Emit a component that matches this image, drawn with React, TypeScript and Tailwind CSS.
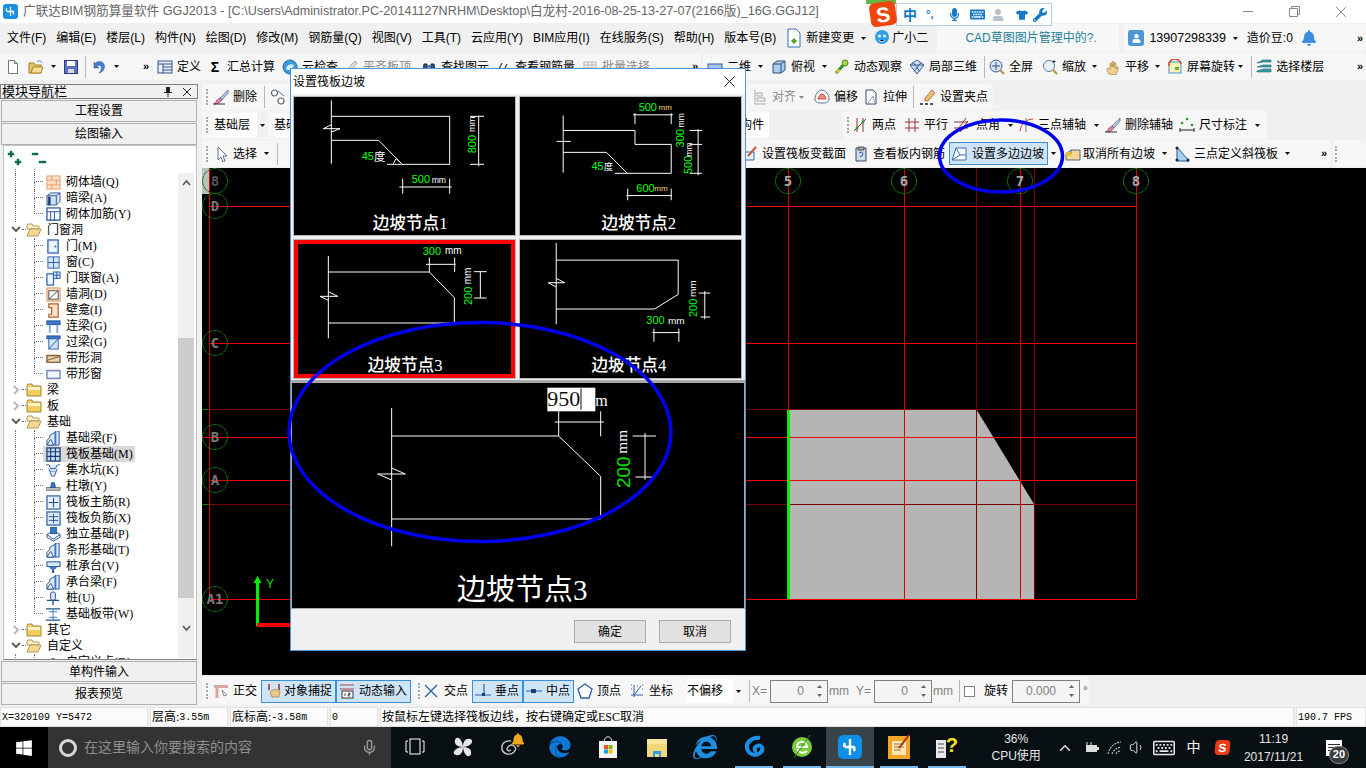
import type { ReactNode } from 'react';
import { FaBell, FaEdge, FaInternetExplorer, FaKeyboard, FaMicrophone, FaRegKeyboard, FaTshirt, FaUser, FaWindows, FaWrench } from 'react-icons/fa';
import { ChevronUp, Mic, Volume1 } from 'lucide-react';

const UI = "font-['Liberation_Sans','Noto_Sans_CJK_SC',sans-serif]";
const SERIF = "font-['Liberation_Serif','Noto_Sans_CJK_SC',serif]";

const S = ({ w = 16, h = 16, children }: { w?: number; h?: number; children: ReactNode }) => (
  <svg width={w} height={h} viewBox="0 0 16 16" className="shrink-0">{children}</svg>
);

const Caret = ({ gray = false, className = '' }: { gray?: boolean; className?: string }) => (
  <svg width="5" height="3" viewBox="0 0 5 3" className={`shrink-0 ${className}`}><path d="M0 0h5L2.5 3z" fill={gray ? '#888' : '#111'} /></svg>
);
const More = ({ className = '' }: { className?: string }) => <span className={`text-[11px] leading-none font-bold text-black ${className}`}>»</span>;
const Sep = ({ className = '' }: { className?: string }) => <div className={`w-px h-[22px] bg-[#b8b8b8] shrink-0 ${className}`} />;
const Grip = ({ className = '' }: { className?: string }) => <div className={`w-[2px] h-[16px] border-l-2 border-dotted border-[#a8a8a8] shrink-0 ${className}`} />;

const Tool = ({ icon, label, className = '', gray = false, gap = 'gap-1' }: { icon?: ReactNode; label: string; className?: string; gray?: boolean; gap?: string }) => (
  <div className={`flex items-center shrink-0 whitespace-nowrap ${gap} ${gray ? 'text-[#8a8a8a]' : 'text-black'} ${className}`}>
    {icon}
    <span>{label}</span>
  </div>
);

// toolbar icons
const I = {
  newDoc: <S><path d="M3.5 1.5h6l3 3v10h-9z" fill="#fff" stroke="#777" /><path d="M9.5 1.5v3h3" fill="#ddd" stroke="#777" /></S>,
  open: <S><path d="M1 4h5l1 2h6v8H1z" fill="#e8c56a" stroke="#a5822c" /><path d="M3 14l2-6h10l-2 6z" fill="#f6de96" stroke="#a5822c" /><path d="M9 3c2-2 4-1 5 1" stroke="#3a7bd5" fill="none" /></S>,
  save: <S><rect x="1.5" y="1.5" width="13" height="13" fill="#5a6fc0" stroke="#2d3c80" /><rect x="4" y="2" width="8" height="5" fill="#fff" /><rect x="5" y="10" width="6" height="4" fill="#d8d8e8" /></S>,
  undo: <S><path d="M5 3C10 1 14 5 12 10c-1 2-3 4-5 4 2-2 3-4 2-7-1-1-3-1-4 0l2 2H2V3l1.5 1.5z" fill="#3f7fd0" stroke="#24528f" strokeWidth=".5" /></S>,
  define: <S><rect x="1" y="2" width="14" height="12" fill="#e6eef8" stroke="#34578e" /><path d="M1 5h14M6 5v9M6 8h9M6 11h9" stroke="#34578e" /></S>,
  cloud: <S><circle cx="8" cy="8" r="7" fill="#3c9ae0" stroke="#1c6aa8" /><path d="M4 9c1-3 5-5 8-3l-2 5H5z" fill="#fff" opacity=".8" /></S>,
  ruler: <S><path d="M2 13L12 2l2 2L5 15z" fill="#ddd" stroke="#aaa" /></S>,
  binoc: <S><path d="M2 13l1-8h3v8zM10 13V5h3l1 8z" fill="#384e80" stroke="#1c2d55" /><rect x="6" y="6" width="4" height="3" fill="#6b7fae" /></S>,
  rebar: <S><path d="M3 12l4-8M8 13l4-8" stroke="#444" strokeWidth="1.3" fill="none" /></S>,
  grid: <S><path d="M2 3h12v10H2zM2 6h12M2 9h12M6 3v10M10 3v10" stroke="#b5b5b5" fill="none" /></S>,
  flat: <S><rect x="1" y="5" width="14" height="9" fill="#a8c4e8" stroke="#2f5fa5" /></S>,
  cube: <S><path d="M2 5l4-3h8v9l-4 3H2z" fill="#a9d0ee" stroke="#2e4d78" /><path d="M2 5h8v9M10 5l4-3" stroke="#2e4d78" fill="none" /></S>,
  orbit: <S><path d="M2 14L13 2" stroke="#3c8a24" strokeWidth="3" /><circle cx="11" cy="4" r="3" fill="#a8d84c" stroke="#4f8a1f" /><circle cx="4" cy="12" r="2" fill="#e0c040" /></S>,
  mesh: <S><path d="M8 1l7 5-7 9-7-9z" fill="#cfe0f4" stroke="#3d5f96" /><path d="M4 3.5l7 9M12 3.5l-7 9M1 6h14" stroke="#3d5f96" /></S>,
  zoomAll: <S><circle cx="7" cy="7" r="6" fill="#d6e3f6" stroke="#3a5c98" /><path d="M7 3v8M3 7h8" stroke="#33558f" /><path d="M11 11l4 4" stroke="#c09030" strokeWidth="2" /></S>,
  zoom: <S><circle cx="7" cy="7" r="5.5" fill="#e8f0fa" stroke="#6a7f9c" /><path d="M11 11l4 4" stroke="#c09030" strokeWidth="2" /><path d="M12 1v3M10.500 2.500h3" stroke="#333" /></S>,
  hand: <S><path d="M4 15c-2-3-3-5-1-6l2 1V5c0-1 1-1 2 0v3-5c0-1 2-1 2 0v5-4c1-1 2 0 2 1v5l1-2c1 0 2 0 1 2l-2 6z" fill="#f0d090" stroke="#a07f35" strokeWidth=".7" /></S>,
  rotate: <S><rect x="2" y="3" width="12" height="11" fill="#fdf0b0" stroke="#3a9ad0" /><path d="M2 7a6 6 0 0 1 12-2" stroke="#e0462c" strokeWidth="1.5" fill="none" /><rect x="8" y="8" width="4" height="3" fill="#62b047" /></S>,
  layers: <S><path d="M1 4l6-3h8v2H7zM1 8l6-2h8v2H7zM1 12l6-2h8v3H1z" fill="#2fa39c" stroke="#215f8b" strokeWidth=".6" /></S>,
  brush: <S><path d="M15 1L7 9l2 2 6-7z" fill="#b6c8e4" stroke="#50617d" strokeWidth=".7" /><path d="M7 9l2 2-3 3c-2 1-4 1-5 1 1-1 2-2 3-4z" fill="#e080a8" stroke="#7a3556" strokeWidth=".6" /><path d="M0 15h12" stroke="#333" /></S>,
  link: <S><circle cx="4.500" cy="4" r="3" fill="#fff" stroke="#666" strokeWidth="1.200" /><circle cx="11" cy="12" r="3" fill="#fff" stroke="#666" strokeWidth="1.200" /><path d="M8 2l6 5" stroke="#3a6fb0" /></S>,
  align: <S><path d="M3 1v14M3 15h11M5 4h5v3H5zM5 9h8v3H5z" stroke="#aaa" fill="none" /></S>,
  offset: <S><path d="M8 1c4 0 7 5 7 9 0 3-2 4-7 4s-7-1-7-4c0-4 3-9 7-9z" fill="#fff" stroke="#5a6f90" /><path d="M8 5c2 0 4 3 4 5H4c0-2 2-5 4-5z" fill="#f08a80" stroke="#d04a3a" /></S>,
  stretch: <S><path d="M3 1h7l3 3v11H3z" fill="#fff" stroke="#2e4d78" /><path d="M5 14l5-7 2 7" stroke="#2e4d78" strokeDasharray="1 1" fill="none" /></S>,
  grip: <S><path d="M12 1l3 3-7 8H5V9z" fill="#e8c070" stroke="#a04a30" strokeWidth=".7" /><path d="M0 15h3M5 15h3M10 15h3" stroke="#222" strokeWidth="1.500" /></S>,
  two: <S><path d="M2 14L14 2M5 1v14M11 1v14" stroke="#8a3038" /><circle cx="5" cy="11" r="1.500" fill="#26a030" /><circle cx="11" cy="5" r="1.500" fill="#26a030" /></S>,
  para: <S><path d="M1 5h14M1 11h14M5 1v14M11 1v14" stroke="#a0303a" /></S>,
  angle: <S><path d="M1 5h14M1 11h14M3 15L13 1M7 15L15 4" stroke="#8a3038" /></S>,
  arc: <S><path d="M2 14C3 6 9 2 15 2" stroke="#e03030" fill="none" /><path d="M8 1v14" stroke="#777" /></S>,
  dims: <S><path d="M1 11v4M15 11v4M1 13h14" stroke="#222" /><circle cx="3" cy="6" r="1.300" fill="#2a9a30" /><circle cx="8" cy="2" r="1.300" fill="#2a9a30" /><circle cx="13" cy="8" r="1.300" fill="#2a9a30" /></S>,
  cursor: <S><path d="M4 1l9 9H9l2 5-2 1-2-5-3 3z" fill="#fff" stroke="#5f6f88" /></S>,
  varSec: <S><path d="M2 6h10v8H2z" fill="#e8f2fc" stroke="#2f6fb5" /><path d="M6 10L14 1" stroke="#d0503a" strokeWidth="2" /></S>,
  viewBar: <S><path d="M3 2h10v13H3z" fill="#cfdcec" stroke="#344a70" /><path d="M5 1h6v3H5z" fill="#a8a8a8" stroke="#555" /><path d="M6 7c3-2 5 0 3 3l-2 1" stroke="#2a5a9a" fill="none" /></S>,
  polySlope: <S><path d="M1 14l4-12h10v12z" fill="#fff" stroke="#3a6fb5" /><path d="M5 2l4 7h6M9 9l-8 5" stroke="#3a6fb5" fill="none" /></S>,
  cancelSlope: <S><path d="M1 14V8l5-4h9v10z" fill="#f5d890" stroke="#556a90" /><path d="M1 8h5V4" stroke="#556a90" fill="none" /><rect x="1" y="6" width="5" height="4" fill="#e8c030" /></S>,
  threeSlope: <S><path d="M3 1v14h12z" fill="#a8d0f0" stroke="#2a5a9a" /><circle cx="3" cy="2" r="1.500" fill="#223" /><circle cx="3" cy="14" r="1.500" fill="#223" /><circle cx="14" cy="14" r="1.500" fill="#223" /></S>,
  ortho: <S><path d="M1 2h14v3H1z" fill="#d9a6a6" /><path d="M4 2v13" stroke="#d9a6a6" strokeWidth="3" /><path d="M9 7l5 5-3 1z" fill="#eef" stroke="#667" strokeWidth=".7" /></S>,
  snap: <S><path d="M3 1v6M13 1v6" stroke="#8a3038" strokeWidth="1.500" /><path d="M4 9c2-3 8-3 10-1l-1 6H6z" fill="#e8c98a" stroke="#a08040" strokeWidth=".7" /></S>,
  dyn: <S><path d="M1 2h14M1 6h14" stroke="#b04040" /><rect x="3" y="8" width="11" height="7" fill="#fff" stroke="#333" /><path d="M6 10v3M9 10h2v1.500H9V13h2" stroke="#222" fill="none" strokeWidth=".8" /></S>,
  cross: <S><path d="M2 2l12 12M14 2L2 14" stroke="#2d5fa5" strokeWidth="1.300" /></S>,
  perp: <S><path d="M0 12h16M9 1v11" stroke="#2d5fa5" strokeWidth="1.200" /><rect x="7" y="10" width="3" height="3" fill="#1c3f78" /></S>,
  mid: <S><path d="M0 8h16" stroke="#2d5fa5" /><rect x="5" y="6" width="5" height="4" fill="#1c3f78" /></S>,
  vertex: <S><path d="M8 1l7 5-3 9H4L1 6z" fill="#fff" stroke="#2d5fa5" strokeWidth="1.300" /></S>,
  coord: <S><path d="M5 2v12M2 12h12" stroke="#2d5fa5" /><path d="M2 2h1M2 6h1M13 2h1M13 6h1M8 3h1" stroke="#2d5fa5" strokeDasharray="1 1" /><path d="M5 12l7-9" stroke="#2d5fa5" /></S>,
};

// tree icons
const TI: Record<string, ReactNode> = {
  brick: <S w={15} h={15}><rect x="1" y="1" width="14" height="14" fill="#fbe0cc" stroke="#e79a63" /><path d="M1 5.500h14M1 10.500h14M6 1v4.500M11 5.500v5M6 10.500V15" stroke="#e79a63" /></S>,
  hbeam: <S w={15} h={15}><path d="M1 5l4-3h10v9l-4 4H1z" fill="#cfe0f2" stroke="#365a92" /><path d="M1 5h10v10M11 5l4-3" stroke="#365a92" fill="none" /><rect x="2" y="6" width="3" height="9" fill="#204a86" /></S>,
  rein: <S w={15} h={15}><rect x="1" y="1" width="14" height="13" fill="#fff" stroke="#1f4f96" strokeWidth="1.300" /><path d="M1 5h14M5 5v10M9 5v10" stroke="#1f4f96" /></S>,
  door: <S w={15} h={15}><rect x="2" y="1" width="11" height="14" fill="#d8e8fa" stroke="#2c5ea8" strokeWidth="1.300" /><rect x="4" y="3" width="7" height="10" fill="#eef6ff" /><circle cx="10" cy="8" r="1" fill="#2c5ea8" /></S>,
  win: <S w={15} h={15}><rect x="2" y="2" width="12" height="12" fill="#d0e4fa" stroke="#2c5ea8" /><path d="M8 2v12M2 8h12" stroke="#2c5ea8" /></S>,
  dwin: <S w={15} h={15}><rect x="1" y="3" width="7" height="12" fill="#eef6ff" stroke="#2c5ea8" strokeWidth="1.300" /><rect x="8" y="1" width="7" height="7" fill="#cfe2fa" stroke="#2c5ea8" /><path d="M11.500 1v7M8 4.500h7" stroke="#2c5ea8" /></S>,
  hole: <S w={15} h={15}><rect x="1" y="1" width="14" height="14" fill="#fbe0cc" stroke="#e08a50" /><rect x="3" y="4" width="10" height="9" fill="#fff" stroke="#4c4c4c" /><path d="M3 13L13 4" stroke="#4c4c4c" /></S>,
  niche: <S w={15} h={15}><path d="M3 1h10v14H3v-3h3V5H3z" fill="#fbe0cc" stroke="#b8602a" strokeWidth="1.300" /></S>,
  lbeam: <S w={15} h={15}><rect x="1" y="2" width="14" height="4" fill="#3c76c4" stroke="#1f4f96" /><path d="M4 6v9M12 6v9" stroke="#7fa8dc" strokeWidth="2" /></S>,
  gbeam: <S w={15} h={15}><rect x="1" y="1" width="14" height="3" fill="#3c76c4" stroke="#1f4f96" /><rect x="3" y="4" width="10" height="11" fill="#d0e4fa" stroke="#2c5ea8" /><path d="M3 15L13 4" stroke="#2c5ea8" /></S>,
  bhole: <S w={15} h={15}><path d="M0 3h15v10H0z" fill="#f3ddd0" /><rect x="1" y="5" width="14" height="7" fill="#e9d5b8" stroke="#7a4a20" strokeWidth="1.200" /><path d="M1 10l13-4" stroke="#7a4a20" /></S>,
  bwin: <S w={15} h={15}><path d="M0 2h15v12H0z" fill="#f8dcd4" /><rect x="1" y="4" width="14" height="8" fill="#f2f7ff" stroke="#4d78bc" strokeWidth="1.200" /></S>,
  fbeam: <S w={15} h={15}><path d="M1 15V10l3-3V5l7-5h3v15z" fill="#dbe7f5" stroke="#1f4f96" /><path d="M1 15l4-6 3 6z" fill="#fff" stroke="#1f4f96" /><path d="M10 1v14" stroke="#3c76c4" strokeWidth="2" /></S>,
  raft: <S w={15} h={15}><rect x="1" y="1" width="14" height="14" fill="#c5d8ee" stroke="#15396e" strokeWidth="1.300" /><path d="M5 1v14M10 1v14M1 5h14M1 10h14" stroke="#15396e" strokeWidth="1.200" /></S>,
  pit: <S w={15} h={15}><path d="M0 2h3l2 4h5l2-4h3M3 6l3 8h3l3-8" fill="#d6e7f8" stroke="#2c5ea8" /><path d="M5 9h5" stroke="#2c5ea8" strokeDasharray="1 1" /></S>,
  pier: <S w={15} h={15}><rect x="0" y="9" width="15" height="3" fill="#c0c0c0" stroke="#777" /><path d="M5 9l1-5h3l1 5z" fill="#3c76c4" stroke="#1f4f96" /></S>,
  main: <S w={15} h={15}><rect x="1" y="1" width="14" height="14" fill="#e6f0fb" stroke="#2c5ea8" strokeWidth="1.300" /><path d="M8 3v10M3 8h10" stroke="#1f4f96" strokeWidth="1.200" /></S>,
  neg: <S w={15} h={15}><rect x="1" y="1" width="14" height="14" fill="#dbe8f7" stroke="#2c5ea8" strokeWidth="1.300" /><path d="M8 3v10M3 6h10M3 10h10" stroke="#1f4f96" /></S>,
  ind: <S w={15} h={15}><path d="M1 8l7-4 7 4-7 5z" fill="#f4f8fd" stroke="#1f4f96" /><path d="M1 8v3l7 4 7-4V8" fill="none" stroke="#1f4f96" /><rect x="5" y="0" width="6" height="7" fill="#3c76c4" stroke="#1f4f96" /></S>,
  cap: <S w={15} h={15}><rect x="1" y="3" width="14" height="5" fill="#d6e7f8" stroke="#1f4f96" /><path d="M3 8h9l-2 3H5z" fill="#3c76c4" /><path d="M7.500 11v4" stroke="#1f4f96" strokeWidth="2" /></S>,
  pile: <S w={15} h={15}><rect x="5" y="1" width="5" height="9" rx="2" fill="#dbe8f7" stroke="#1f4f96" /><path d="M1 10h13M7.500 10v5" stroke="#1f4f96" strokeWidth="1.500" /></S>,
  band: <S w={15} h={15}><path d="M0 2h15M0 14h15" stroke="#1f4f96" strokeWidth="1.300" /><path d="M7.500 2v12M3 5h9M3 11h9" stroke="#3c76c4" /></S>,
};

const Folder = ({ open }: { open: boolean }) => (
  <svg width="16" height="14" viewBox="0 0 16 14" className="shrink-0">
    {open ? (
      <>
        <path d="M1 3l1-2h4l1 2h6v3H1z" fill="#fff3c8" stroke="#b3985a" />
        <path d="M1 13l3-7h11l-3 7z" fill="#f4d890" stroke="#b3985a" />
      </>
    ) : (
      <>
        <path d="M1 3l1-2h4l1 2h8v10H1z" fill="#f3cd60" stroke="#a8863a" />
        <rect x="2" y="4" width="12" height="3" fill="#fff3c8" />
      </>
    )}
  </svg>
);

type Row = { l: string; i?: string; last?: boolean; open?: boolean; sel?: boolean };
const rows: Row[] = [
  { l: '砌体墙(Q)', i: 'brick' },
  { l: '暗梁(A)', i: 'hbeam' },
  { l: '砌体加筋(Y)', i: 'rein', last: true },
  { l: '门窗洞', open: true },
  { l: '门(M)', i: 'door' },
  { l: '窗(C)', i: 'win' },
  { l: '门联窗(A)', i: 'dwin' },
  { l: '墙洞(D)', i: 'hole' },
  { l: '壁龛(I)', i: 'niche' },
  { l: '连梁(G)', i: 'lbeam' },
  { l: '过梁(G)', i: 'gbeam' },
  { l: '带形洞', i: 'bhole' },
  { l: '带形窗', i: 'bwin', last: true },
  { l: '梁', open: false },
  { l: '板', open: false },
  { l: '基础', open: true },
  { l: '基础梁(F)', i: 'fbeam' },
  { l: '筏板基础(M)', i: 'raft', sel: true },
  { l: '集水坑(K)', i: 'pit' },
  { l: '柱墩(Y)', i: 'pier' },
  { l: '筏板主筋(R)', i: 'main' },
  { l: '筏板负筋(X)', i: 'neg' },
  { l: '独立基础(P)', i: 'ind' },
  { l: '条形基础(T)', i: 'fbeam' },
  { l: '桩承台(V)', i: 'cap' },
  { l: '承台梁(F)', i: 'fbeam' },
  { l: '桩(U)', i: 'pile' },
  { l: '基础板带(W)', i: 'band', last: true },
  { l: '其它', open: false },
  { l: '自定义', open: true },
  { l: '自定义点(D)', i: 'pier' },
];

const TreeRow = ({ r }: { r: Row }) => {
  if (!r.i) {
    return (
      <div className="flex items-center h-4 shrink-0">
        <div className="w-[6px]" />
        <svg width="12" height="10" viewBox="0 0 12 10" className="shrink-0">
          <path d={r.open ? 'M2 2l4 4 4-4' : 'M4 1l4 4-4 4'} stroke={r.open ? '#555' : '#b5b5b5'} strokeWidth="1.800" fill="none" />
        </svg>
        <div className="w-[4px] h-2 border-b border-dotted border-[#777] self-start" />
        <Folder open={!!r.open} />
        <span className="ml-[5px] text-[12px]">{r.l}</span>
      </div>
    );
  }
  return (
    <div className="flex h-4 shrink-0">
      <div className="w-[11px]" />
      <div className="w-[19px] border-l border-dotted border-[#777]" />
      <div className="w-[9px] flex flex-col">
        <div className="h-2 border-l border-b border-dotted border-[#777]" />
        <div className={`h-2 ${r.last ? '' : 'border-l border-dotted border-[#777]'}`} />
      </div>
      <div className={`flex items-center pl-[3px] pr-[2px] ${r.sel ? 'bg-[#d9d9d9]' : ''}`}>
        {TI[r.i]}
        <span className="ml-[5px] text-[12px] whitespace-nowrap">{r.l}</span>
      </div>
    </div>
  );
};

const PanelBtn = ({ label, className = '' }: { label: string; className?: string }) => (
  <div className={`mx-px w-[196px] border border-[#b0b0b0] bg-[#f0f0f0] flex items-center justify-center text-[12px] text-black ${className}`}>{label}</div>
);

const LeftPanel = () => (
  <div className={`w-[200px] shrink-0 flex flex-col pt-[3px] ${SERIF}`}>
    <div className="h-[15px] w-[198px] flex items-center border border-[#808080] text-[13px] leading-none">
      <span className="pl-[1px] flex-1">模块导航栏</span>
      <svg width="8" height="10" viewBox="0 0 8 10" className="mr-[11px]"><path d="M2 0v5H0v1h3.500v4h1V6H8V5H6V0z" fill="#222" /></svg>
      <svg width="8" height="8" viewBox="0 0 8 8" className="mr-[6px]"><path d="M0 0l8 8M8 0L0 8" stroke="#222" /></svg>
    </div>
    <PanelBtn label="工程设置" className="mt-px h-[22px]" />
    <PanelBtn label="绘图输入" className="mt-px h-[22px]" />
    <div className="ml-[3px] w-[194px] h-[515px] bg-white border border-[#c0c0c0] border-b-[#808080] flex flex-col overflow-hidden">
      <div className="h-[23px] flex items-center pl-[3px] gap-2 shrink-0">
        <svg width="16" height="16" viewBox="0 0 16 16"><path d="M3 1h2v2h2v2H5v2H3V5H1V3h2zM10 9h2v2h2v2h-2v2h-2v-2H8v-2h2z" fill="#0c6e62" stroke="#063" strokeWidth=".4" /></svg>
        <svg width="16" height="16" viewBox="0 0 16 16"><path d="M1 3h6v2H1zM8 11h7v2H8z" fill="#0c6e62" stroke="#063" strokeWidth=".4" /></svg>
      </div>
      <div className="flex flex-1 min-h-0">
        <div className="flex-1 min-w-0 overflow-hidden flex flex-col">
          <div className="flex h-[5px] shrink-0">
            <div className="w-[11px]" />
            <div className="w-[19px] border-l border-dotted border-[#777]" />
            <div className="w-[9px] border-l border-dotted border-[#777]" />
          </div>
          {rows.map((r) => <TreeRow key={r.l} r={r} />)}
        </div>
        <div className="w-[16px] mr-[2px] mt-[4px] mb-[1px] bg-[#f0f0f0] flex flex-col items-center shrink-0">
          <div className="h-[19px] flex items-center">
            <svg width="9" height="6" viewBox="0 0 9 6"><path d="M1 5l3.500-4L8 5" stroke="#555" strokeWidth="1.600" fill="none" /></svg>
          </div>
          <div className="h-[146px]" />
          <div className="w-full h-[260px] bg-[#cdcdcd]" />
          <div className="flex-1 flex items-center">
            <svg width="9" height="6" viewBox="0 0 9 6"><path d="M1 1l3.500 4L8 1" stroke="#555" strokeWidth="1.600" fill="none" /></svg>
          </div>
        </div>
      </div>
    </div>
    <PanelBtn label="单构件输入" className="mt-px h-[21px]" />
    <PanelBtn label="报表预览" className="mt-px h-[22px]" />
  </div>
);

const Bubble = ({ x, y, t, c = '#8a8a8a' }: { x: number; y: number; t: string; c?: string }) => (
  <>
    <circle cx={x} cy={y} r="12.500" fill="none" stroke="#0a7a0a" strokeDasharray="5 .6" />
    <text x={x} y={y + 5} textAnchor="middle" fontSize="14" fontWeight="bold" fill={c} className="font-['DejaVu_Sans_Mono',monospace]">{t}</text>
  </>
);

const Canvas = () => (
  <svg viewBox="202 168 1164 507" className="w-[1164px] h-[507px] bg-black block mt-px shrink-0">
    <rect x="202" y="168" width="7" height="26" fill="#bdbdbd" />
    <path d="M788 409.500H976.500L1034 504V599H788z" fill="#b5b5b5" />
    <g shapeRendering="crispEdges" fill="none">
      <path d="M209 206.500H1136M209 343.500H1136M202 437.500H1136M209 480.500H1136M209 599.500H1136" stroke="#f00000" />
      <path d="M202 409.500H1136M202 504.500H1136" stroke="#7a0000" />
      <path d="M209.500 168V599M788.500 168V599M904.500 168V599M1020.500 168V599M1136.500 168V599" stroke="#d80000" />
      <path d="M976.500 168V599M1034.500 168V599" stroke="#7a0000" />
      <path d="M202 409.500H209M202 504.500H209" stroke="#0a7a0a" />
      <rect x="787" y="410" width="3" height="189" fill="#00f000" stroke="none" />
      <rect x="256" y="582" width="3" height="44" fill="#00f000" stroke="none" />
      <rect x="257" y="623" width="40" height="4" fill="#f00000" stroke="none" />
    </g>
    <path d="M257.500 576l4 7h-8z" fill="#00f000" />
    <text x="266" y="588" fontSize="12" fill="#00e000" className="font-['Liberation_Sans',sans-serif]">Y</text>
    <Bubble x={215} y={181} t="8" c="#555" />
    <Bubble x={215} y={206} t="D" c="#777" />
    <Bubble x={215} y={343} t="C" c="#777" />
    <Bubble x={215} y={437} t="B" c="#777" />
    <Bubble x={215} y={480} t="A" c="#777" />
    <Bubble x={215} y={599} t="A1" c="#777" />
    <Bubble x={788} y={181} t="5" c="#aaa" />
    <Bubble x={904} y={181} t="6" c="#aaa" />
    <Bubble x={1020} y={181} t="7" c="#aaa" />
    <Bubble x={1136} y={181} t="8" c="#aaa" />
  </svg>
);

// labels inside the node pictures, coordinates are 3x page pixels
const Lbl = ({ x, y, t, c = '#00ff00', s = 33, r }: { x: number; y: number; t: string; c?: string; s?: number; r?: boolean }) => (
  <text x={x} y={y} fill={c} fontSize={s} transform={r ? `rotate(-90 ${x} ${y})` : undefined} className="font-['Liberation_Sans','Noto_Sans_CJK_SC',sans-serif]">{t}</text>
);
const Title = ({ x, y, t, s = 50 }: { x: number; y: number; t: string; s?: number }) => (
  <text x={x} y={y} fill="#fff" fontSize={s} fontWeight={s < 60 ? 500 : 400} className="font-['Liberation_Serif','Noto_Sans_CJK_SC',serif]">{t}</text>
);
const Wire = ({ d, w = 3 }: { d: string; w?: number }) => <path d={d} stroke="#fff" strokeWidth={w} fill="none" />;

const Thumb1 = () => (
  <svg viewBox="12 87 663 414" className="w-[221px] h-[138px] block bg-black">
    <Wire d="M124 97V287M124 145H479V289H291M124 217H266L335 287M100 182H150M124 170L100 182M124 192L150 182M310 287L318 272L335 287M540 145H582M540 289H582M566 143V295M338 332V377M479 332V377M328 357H485" />
    <Lbl x={558} y={256} t="800" r />
    <Lbl x={556} y={192} t="mm" c="#fff" s={28} r />
    <Lbl x={215} y={277} t="45" />
    <Lbl x={252} y={280} t="度" c="#fff" s={34} />
    <Lbl x={365} y={345} t="500" />
    <Lbl x={425} y={346} t="mm" c="#fff" s={26} />
    <Title x={248} y={484} t="边坡节点1" />
  </svg>
);
const Thumb2 = () => (
  <svg viewBox="690 87 665 414" className="w-[221px] h-[138px] block bg-black">
    <Wire d="M820 142V314M820 187H1036V229H1145V316H975M820 253H950L1013 316M800 220H843M1036 135V168M1145 135V168M1030 140H1150M1200 187H1238M1200 229H1238M1200 316H1238M1226 183V322M1014 362V397M1145 362V397M1010 383H1147" />
    <Lbl x={1047} y={129} t="500" />
    <Lbl x={1107} y={126} t="mm" c="#ffcf80" s={24} />
    <Lbl x={1184} y={238} t="300" r />
    <Lbl x={1184} y={178} t="mm" c="#fff" s={26} r />
    <Lbl x={1208} y={318} t="500" r />
    <Lbl x={1207} y={266} t="mm" c="#fff" s={26} r />
    <Lbl x={1040} y={372} t="600" />
    <Lbl x={1094} y={368} t="mm" c="#ffcf80" s={24} />
    <Lbl x={905} y={305} t="45" />
    <Lbl x={942} y={306} t="度" c="#fff" s={28} />
    <Title x={935} y={483} t="边坡节点2" />
  </svg>
);
const Thumb3 = () => (
  <svg viewBox="12 517 663 414" className="w-[221px] h-[138px] block bg-black">
    <Wire d="M115 565V812M115 613H418L493 690V766M115 766H493M90 686H143M115 672L143 686M115 698L90 686M418 570V613M494 570V613M408 590H497M552 612H590M552 691H590M571 612V691" />
    <Lbl x={398} y={563} t="300" />
    <Lbl x={465} y={560} t="mm" c="#fff" s={30} />
    <Lbl x={545} y={712} t="200" r />
    <Lbl x={542} y={650} t="mm" c="#fff" s={30} r />
    <Title x={233} y={910} t="边坡节点3" />
    <rect x="18" y="523" width="651" height="402" fill="none" stroke="#ff0000" strokeWidth="12" />
  </svg>
);
const Thumb4 = () => (
  <svg viewBox="690 517 665 414" className="w-[221px] h-[138px] block bg-black">
    <Wire d="M799 525V770M799 577H1166V680L1095 724H799M775 645H825M799 632L825 645M799 658L775 645M1228 676H1262M1233 748H1262M1246 670V755M1093 783V823M1168 783V823M1088 795H1170" />
    <Lbl x={1223} y={748} t="200" r />
    <Lbl x={1220} y={688} t="mm" c="#fff" s={30} r />
    <Lbl x={1070} y={770} t="300" />
    <Lbl x={1135} y={768} t="mm" c="#fff" s={30} />
    <Title x={905} y={910} t="边坡节点4" />
  </svg>
);
const BigNode = () => (
  <svg viewBox="20 10 1356 675" className="w-[452px] h-[225px] block bg-black">
    <Wire d="M319 85V500M319 169H820L946 290V418H319M277 283H360M319 265L360 283M319 301L277 283M820 95V169M946 95V170M808 127H956M1042 169H1112M1050 292H1105M1079 160V300" />
    <rect x="786" y="24" width="144" height="71" fill="#fff" />
    <text x="786" y="80" fontSize="66" fill="#111" className="font-['Liberation_Serif',serif]">950</text>
    <path d="M887 27V90" stroke="#111" strokeWidth="3" />
    <text x="930" y="78" fontSize="48" fill="#fff" className="font-['Liberation_Serif',serif]">m</text>
    <Lbl x={1034} y={325} t="200" s={57} c="#00e000" r />
    <text x="1026" y="222" fontSize="46" fill="#fff" transform="rotate(-90 1026 222)" className="font-['Liberation_Serif',serif]">mm</text>
    <Title x={515} y={660} t="边坡节点3" s={87} />
  </svg>
);

const DlgBtn = ({ label }: { label: string }) => (
  <div className="w-[72px] h-[23px] border border-[#adadad] bg-[#e1e1e1] flex items-center justify-center text-[12px] text-black">{label}</div>
);

const Dialog = () => (
  <div className={`absolute left-[290px] top-[68px] w-[456px] h-[583px] border border-[#4a97e0] bg-[#f0f0f0] flex flex-col ${UI}`}>
    <div className="h-[25px] bg-white flex items-center justify-between pl-[2px] pr-[10px] shrink-0">
      <span className="text-[12px] text-black">设置筏板边坡</span>
      <svg width="11" height="11" viewBox="0 0 11 11"><path d="M.5.500l10 10M10.500.500l-10 10" stroke="#222" /></svg>
    </div>
    <div className="pt-[2px] pl-[2px] grid grid-cols-[223px_223px] gap-[3px] shrink-0">
      <div className="border border-[#b8b8b8]"><Thumb1 /></div>
      <div className="border border-[#b8b8b8]"><Thumb2 /></div>
      <div className="border border-[#b8b8b8]"><Thumb3 /></div>
      <div className="border border-[#b8b8b8]"><Thumb4 /></div>
    </div>
    <div className="mt-px h-[3px] bg-[#a8a8a8] shrink-0" />
    <div className="border-l border-r border-b border-[#a8a8a8] w-[454px] shrink-0"><BigNode /></div>
    <div className="flex justify-end gap-[13px] pr-[14px] pt-[11px]">
      <DlgBtn label="确定" />
      <DlgBtn label="取消" />
    </div>
  </div>
);

const Spin = ({ v, className = '' }: { v: string; className?: string }) => (
  <div className={`h-[23px] border border-[#808080] bg-[#f5f5f5] flex items-center shrink-0 ${className}`}>
    <span className="flex-1 text-right text-[#808080] text-[12px] pr-[7px]">{v}</span>
    <div className="w-[16px] h-full flex flex-col items-center justify-around py-[2px]">
      <svg width="5" height="3" viewBox="0 0 5 3"><path d="M2.500 0L5 3H0z" fill="#666" /></svg>
      <svg width="5" height="3" viewBox="0 0 5 3"><path d="M0 0h5L2.500 3z" fill="#666" /></svg>
    </div>
  </div>
);

const GROUP = 'bg-[#f6f6f6] rounded-[3px] flex items-center shrink-0';

const MainArea = () => (
  <div className={`flex-1 min-w-0 flex flex-col pt-[3px] text-[12px] ${UI}`}>
    <div className="flex h-[26px] shrink-0">
      <div className={`${GROUP} w-[791px]`}>
        <Grip className="ml-[4px]" />
        <Tool icon={I.brush} label="删除" className="ml-[5px]" />
        <Sep className="ml-[7px]" />
        <div className="ml-[5px]">{I.link}</div>
        <Tool icon={I.align} label="对齐" gray className="ml-[466px]" />
        <Caret gray className="ml-[3px]" />
        <Tool icon={I.offset} label="偏移" className="ml-[10px]" />
        <Tool icon={I.stretch} label="拉伸" className="ml-[5px]" />
        <Sep className="ml-[6px]" />
        <Tool icon={I.grip} label="设置夹点" className="ml-[6px]" />
      </div>
    </div>
    <div className="flex h-[28px] mt-px shrink-0">
      <div className={`${GROUP} w-[567px]`}>
        <Grip className="ml-[4px]" />
        <div className="ml-[5px] w-[44px] h-[24px] bg-white flex items-center pl-px">基础层</div>
        <div className="w-[11px] h-[24px] bg-[#f0f0f0] flex items-center justify-center"><Caret /></div>
        <div className="ml-[5px] flex-1 h-[24px] bg-white flex items-center pl-px justify-between pr-[5px]">
          <span>基础</span>
          <span>构件</span>
        </div>
      </div>
      <div className={`${GROUP} w-[424px] ml-[74px]`}>
        <Grip className="ml-[4px]" />
        <Tool icon={I.two} label="两点" className="ml-[3px]" />
        <Tool icon={I.para} label="平行" className="ml-[8px]" />
        <Tool icon={I.angle} label="点角" className="ml-[5px]" gap="gap-[7px]" />
        <Caret className="ml-[8px]" />
        <Tool icon={I.arc} label="三点辅轴" className="ml-[5px]" />
        <Caret className="ml-[8px]" />
        <Tool icon={I.brush} label="删除辅轴" className="ml-[6px]" />
        <Tool icon={I.dims} label="尺寸标注" className="ml-[6px]" />
        <Caret className="ml-[8px]" />
      </div>
    </div>
    <div className="flex h-[27px] mt-px shrink-0">
      <div className={`${GROUP} w-[1128px]`}>
        <Grip className="ml-[4px]" />
        <div className="ml-[6px]">{I.cursor}</div>
        <span className="ml-[3px]">选择</span>
        <Caret className="ml-[7px]" />
        <Sep className="ml-[8px]" />
        <Tool icon={I.varSec} label="设置筏板变截面" className="ml-[464px]" />
        <Tool icon={I.viewBar} label="查看板内钢筋" className="ml-[7px]" />
        <div className="ml-[4px] w-[99px] h-[23px] border border-[#3a8fd6] bg-[#cfe5f7] flex items-center pl-[1px] gap-[5px]">
          {I.polySlope}<span>设置多边边坡</span>
        </div>
        <Caret className="ml-[3px]" />
        <Tool icon={I.cancelSlope} label="取消所有边坡" className="ml-[9px]" gap="gap-[2px]" />
        <Caret className="ml-[7px]" />
        <Tool icon={I.threeSlope} label="三点定义斜筏板" className="ml-[7px]" gap="gap-[4px]" />
        <Caret className="ml-[7px]" />
        <More className="ml-auto mr-[3px]" />
      </div>
      <div className={`${GROUP} flex-1 ml-[3px] justify-start`}><Grip className="ml-[2px]" /></div>
    </div>
    <Canvas />
    <div className="flex h-[28px] mt-[2px] shrink-0">
      <div className={`${GROUP} w-[210px]`}>
        <Grip className="ml-[4px]" />
        <Tool icon={I.ortho} label="正交" className="ml-[5px]" />
        <div className="ml-[4px] w-[75px] h-[23px] border border-[#3a8fd6] bg-[#cfe5f7] flex items-center pl-[4px] gap-[2px]">{I.snap}<span>对象捕捉</span></div>
        <div className="w-[75px] h-[23px] border border-[#3a8fd6] bg-[#cfe5f7] flex items-center pl-[2px] gap-[4px]">{I.dyn}<span>动态输入</span></div>
      </div>
      <div className={`${GROUP} ml-[2px] w-[675px]`}>
        <Grip className="ml-[4px]" />
        <Tool icon={I.cross} label="交点" className="ml-[3px]" gap="gap-[5px]" />
        <div className="ml-[4px] w-[51px] h-[23px] border border-[#3a8fd6] bg-[#cfe5f7] flex items-center pl-[2px] gap-[4px]">{I.perp}<span>垂点</span></div>
        <div className="w-[51px] h-[23px] border border-[#3a8fd6] bg-[#cfe5f7] flex items-center pl-[2px] gap-[4px]">{I.mid}<span>中点</span></div>
        <Tool icon={I.vertex} label="顶点" className="ml-[3px]" />
        <Tool icon={I.coord} label="坐标" className="ml-[8px]" />
        <div className="ml-[13px] w-[47px] h-[24px] bg-white flex items-center pl-px">不偏移</div>
        <Caret className="ml-[3px]" />
        <Sep className="ml-[8px]" />
        <span className="ml-[2px] w-[18px] text-[#808080]">X=</span>
        <Spin v="0" className="w-[58px]" />
        <span className="w-[28px] pl-px text-[#808080]">mm</span>
        <span className="w-[18px] text-[#808080]">Y=</span>
        <Spin v="0" className="w-[58px]" />
        <span className="w-[27px] pl-px text-[#808080]">mm</span>
        <Sep />
        <div className="ml-[4px] w-[11px] h-[11px] border border-[#808080] bg-white" />
        <span className="ml-[9px] w-[24px]">旋转</span>
        <Spin v="0.000" className="ml-[4px] w-[68px]" />
        <span className="ml-[3px] text-[#555]">°</span>
      </div>
    </div>
  </div>
);

const StatusCell = ({ children, className = '' }: { children: ReactNode; className?: string }) => (
  <div className={`h-[20px] bg-[#fbfbfb] border border-[#e2e2e2] flex items-center pl-[1px] shrink-0 whitespace-nowrap ${className}`}>{children}</div>
);
const M = ({ t }: { t: string }) => <span className="font-['Liberation_Mono',monospace] text-[10px]">{t}</span>;

const TaskIcon = ({ children, on = false, active = false }: { children: ReactNode; on?: boolean; active?: boolean }) => (
  <div className={`w-[48.36px] h-[41px] flex flex-col items-center shrink-0 ${active ? 'bg-[#38444a]' : ''}`}>
    <div className="flex-1 flex items-center justify-center">{children}</div>
    <div className={`h-[2px] ${active ? 'w-full' : 'w-[38px]'} ${on ? 'bg-[#76b9ed]' : ''}`} />
  </div>
);

const Taskbar = () => (
  <div className={`h-[41px] bg-[#081014] flex items-stretch text-white shrink-0 ${UI}`}>
    <div className="w-[48px] bg-black flex items-center justify-center"><FaWindows size={18} color="#fff" /></div>
    <div className="w-[343px] bg-[#333333] flex items-center pl-[11px] pr-[13px]">
      <div className="w-[18px] h-[18px] rounded-full border-[3px] border-[#d8d8d8]" />
      <span className="ml-[7px] flex-1 text-[14px] text-[#8f8f8f]">在这里输入你要搜索的内容</span>
      <Mic size={17} color="#999" />
    </div>
    <TaskIcon>
      <svg width="20" height="17" viewBox="0 0 20 17"><rect x="5" y="1" width="10" height="15" fill="none" stroke="#fff" /><path d="M3 3H1v11h2M17 3h2v11h-2" fill="none" stroke="#fff" /></svg>
    </TaskIcon>
    <TaskIcon>
      <svg width="22" height="22" viewBox="0 0 22 22"><path d="M11 11C5 11 2 8 3 4s7-3 8 7zM11 11c0-6 3-9 7-8s3 7-7 8zM11 11c6 0 9 3 8 7s-7 3-8-7zM11 11c0 6-3 9-7 8s-3-7 7-8z" fill="#e6e6e6" /></svg>
    </TaskIcon>
    <TaskIcon>
      <div className="relative w-[26px] h-[22px]">
        <svg width="22" height="22" viewBox="0 0 22 22"><path d="M12 5C6 4 2 8 3 13s8 7 12 3-1-9-5-6-1 6 2 4" fill="none" stroke="#c8c8c8" strokeWidth="1.400" /></svg>
        <FaBell size={14} color="#f0a820" className="absolute right-0 top-[-3px]" />
      </div>
    </TaskIcon>
    <TaskIcon><FaEdge size={22} color="#0d78d8" /></TaskIcon>
    <TaskIcon>
      <svg width="22" height="24" viewBox="0 0 22 24"><path d="M7 7c0-7 8-7 8 0" fill="none" stroke="#eee" /><rect x="2" y="6" width="18" height="17" fill="#f4f4f4" /><rect x="7" y="10" width="4" height="4" fill="#e8502a" /><rect x="11.500" y="10" width="4" height="4" fill="#7fba00" /><rect x="7" y="14.500" width="4" height="4" fill="#00a4ef" /><rect x="11.500" y="14.500" width="4" height="4" fill="#ffb900" /></svg>
    </TaskIcon>
    <TaskIcon>
      <svg width="22" height="22" viewBox="0 0 22 22"><path d="M1 3h8l2 2h10v16H1z" fill="#f3d778" /><rect x="1" y="3" width="20" height="5" fill="#f9e59c" /><path d="M7 21v-6h8v6h-2v-3H9v3z" fill="#2a9ce8" /></svg>
    </TaskIcon>
    <TaskIcon><FaInternetExplorer size={24} color="#1e8fe0" /></TaskIcon>
    <TaskIcon on>
      <svg width="24" height="26" viewBox="0 0 24 26"><path d="M18 4C10 3 4 8 5 14s8 9 13 5 1-9-3-7-2 5 0 5" fill="none" stroke="#1a8fe8" strokeWidth="4" /></svg>
    </TaskIcon>
    <TaskIcon on>
      <svg width="24" height="26" viewBox="0 0 24 26"><circle cx="12" cy="13" r="10" fill="#7ccb3c" /><path d="M6 13h12M7 13c0-7 10-7 10 0M17 17c-3 3-8 2-10-2" fill="none" stroke="#fff" strokeWidth="2" /><path d="M20 1L4 24" stroke="#2f8a20" /></svg>
    </TaskIcon>
    <TaskIcon on active>
      <svg width="24" height="24" viewBox="0 0 24 24"><rect width="24" height="24" rx="5" fill="#0f8fe8" /><path d="M12 4v16M7 12h10M7 12a3 3 0 0 1 0-4M17 12a3 3 0 0 0 0 4" stroke="#fff" strokeWidth="2.400" fill="none" /></svg>
    </TaskIcon>
    <TaskIcon on>
      <svg width="24" height="26" viewBox="0 0 24 26"><rect x="1" y="2" width="22" height="23" fill="#f2a526" /><rect x="5" y="7" width="14" height="14" fill="#fbe6b8" /><path d="M7 10h10M7 13h10M7 16h7" stroke="#a07030" /><path d="M22 1L12 14" stroke="#a03010" strokeWidth="2" /></svg>
    </TaskIcon>
    <TaskIcon on>
      <div className="flex items-start">
        <svg width="10" height="20" viewBox="0 0 10 20" className="mt-[6px]"><rect width="10" height="18" fill="#e8e8e8" /><path d="M2 4h6M2 8h6M2 12h6" stroke="#555" /></svg>
        <span className="text-[20px] leading-[22px] font-bold text-[#f5e020]">?</span>
      </div>
    </TaskIcon>
    <div className="ml-[10px] w-[70px] flex flex-col items-center justify-center text-[12px] leading-[17px] text-[#e6e6e6]">
      <span>36%</span>
      <span>CPU使用</span>
    </div>
    <div className="w-[27px] flex items-center justify-center"><ChevronUp size={18} color="#ddd" /></div>
    <div className="w-[25px] flex items-center justify-center">
      <svg width="16" height="12" viewBox="0 0 16 12"><rect x="3" y="3" width="11" height="7" fill="#ddd" /><rect x="14" y="5" width="2" height="3" fill="#ddd" /><path d="M4 0v3M8 0v3" stroke="#ddd" /></svg>
    </div>
    <div className="w-[24px] flex items-center justify-center">
      <svg width="16" height="14" viewBox="0 0 16 14"><path d="M1 13C2 7 7 2 14 1M5 13c1-3 4-6 9-7M9 13c0-1 2-3 5-3" fill="none" stroke="#ccc" strokeWidth="1.100" strokeDasharray="2 1" /></svg>
    </div>
    <div className="w-[21px] flex items-center justify-center"><Volume1 size={17} color="#ddd" strokeWidth={1.400} /></div>
    <div className="w-[32px] flex items-center justify-center"><FaRegKeyboard size={22} color="#e8e8e8" /></div>
    <div className="w-[27px] flex items-center justify-center text-[14px]">中</div>
    <div className="w-[30px] flex items-center justify-center">
      <div className="w-[15px] h-[15px] rounded-[4px] bg-[#ec3a12] flex items-center justify-center text-[12px] font-bold leading-none -skew-x-6">S</div>
    </div>
    <div className="w-[73px] flex flex-col items-center justify-center text-[12px] leading-[18px] text-[#e6e6e6]">
      <span>11:19</span>
      <span>2017/11/21</span>
    </div>
    <div className="w-[56px] flex items-center pl-[16px]">
      <div className="relative w-[16px] h-[16px] bg-white flex flex-col justify-center gap-[2px] px-[2px]">
        <div className="h-px bg-[#333]" />
        <div className="h-px bg-[#333]" />
        <div className="h-px bg-[#333]" />
        <div className="absolute left-[3px] top-[6px] w-[20px] h-[18px] rounded-full bg-[#3a3a3a] border border-[#888] text-[11px] font-bold flex items-center justify-center">20</div>
      </div>
    </div>
  </div>
);

const SogouBar = () => (
  <div className={`absolute left-[866px] top-0 h-[28px] flex items-start ${UI}`}>
    <div className="absolute left-0 top-0 w-[30px] h-[4px] bg-[#62b847]" />
    <div className="relative z-10 mt-[2px] ml-[4px] w-[26px] h-[24px] rounded-[5px] bg-[#f2440f] flex items-center justify-center text-white text-[21px] font-bold leading-none rotate-[-8deg]">S</div>
    <div className="w-[156px] mt-[3px] h-[23px] bg-white border border-[#b7cde0] flex items-center pl-[6px] text-[#1478c8]">
      <span className="text-[14px] font-bold leading-none">中</span>
      <span className="ml-[9px] w-[9px] text-[11px] font-bold leading-none">°,</span>
      <FaMicrophone size={13} className="ml-[13px]" />
      <FaKeyboard size={15} className="ml-[9px]" />
      <FaUser size={12} color="#b5c0cc" className="ml-[7px]" />
      <FaTshirt size={12} className="ml-[12px]" />
      <FaWrench size={14} className="ml-[5px]" />
    </div>
  </div>
);

export default function App() {
  return (
    <div className={`relative w-[1366px] h-[768px] overflow-hidden bg-[#f0f0f0] flex flex-col ${UI}`}>
      <div className="h-[23px] bg-white flex items-center shrink-0">
        <div className="ml-[3px] w-[15px] h-[15px] rounded-[3px] bg-[#1a8fe8] flex items-center justify-center">
          <svg width="11" height="11" viewBox="0 0 11 11"><path d="M5.500 1v9M2 5.500h7M2 5.500a2 2 0 0 1 0-3M9 5.500a2 2 0 0 0 0 3" stroke="#fff" strokeWidth="1.300" fill="none" /></svg>
        </div>
        <span className="ml-[5px] text-[12.650px] text-[#666] whitespace-nowrap">广联达BIM钢筋算量软件 GGJ2013 - [C:\Users\Administrator.PC-20141127NRHM\Desktop\白龙村-2016-08-25-13-27-07(2166版)_16G.GGJ12]</span>
        <div className="ml-auto flex items-center">
          <div className="w-[10px] h-px bg-[#888] mr-[36px]" />
          <svg width="11" height="11" viewBox="0 0 11 11" className="mr-[36px]"><path d="M.5 2.500h8v8h-8zM2.500 2.500v-2h8v8h-2" fill="none" stroke="#888" /></svg>
          <svg width="10" height="10" viewBox="0 0 10 10" className="mr-[20px]"><path d="M0 0l10 10M10 0L0 10" stroke="#888" /></svg>
        </div>
      </div>
      <div className="h-[30px] flex items-center text-[12px] text-black shrink-0">
        <div className="ml-[7px] flex items-center gap-[10px] whitespace-nowrap">
          <span>文件(F)</span><span>编辑(E)</span><span>楼层(L)</span><span>构件(N)</span><span>绘图(D)</span><span>修改(M)</span><span>钢筋量(Q)</span><span>视图(V)</span><span>工具(T)</span><span>云应用(Y)</span><span>BIM应用(I)</span><span>在线服务(S)</span><span>帮助(H)</span><span>版本号(B)</span>
        </div>
        <svg width="16" height="20" viewBox="0 0 16 20" className="ml-[10px]"><path d="M2 1h8l4 4v14H2z" fill="#fff" stroke="#3a6fb5" /><path d="M5 13l3-3 3 3-3 3z" fill="#4fa32a" /></svg>
        <span className="ml-[4px]">新建变更</span>
        <Caret className="ml-[7px]" />
        <svg width="16" height="18" viewBox="0 0 16 18" className="ml-[8px]"><circle cx="8" cy="8" r="7" fill="#2fa0e8" /><circle cx="5.500" cy="7" r="1.500" fill="#fff" /><circle cx="10.500" cy="7" r="1.500" fill="#fff" /><path d="M5 11c2 2 4 2 6 0M3 14l-1 3M13 14l1 3" stroke="#fff" /></svg>
        <span className="ml-[2px]">广小二</span>
        <div className="ml-[9px] w-[182px] h-[28px] bg-[#f7f7f7] flex items-center pl-[28px] text-[#1f7f96]">CAD草图图片管理中的?.</div>
        <div className="ml-[5px] flex-1 h-[28px] bg-[#f6f6f6] rounded-[3px] flex items-center">
          <div className="w-[16px] h-[16px] ml-[4px] rounded-[3px] bg-[#4d96d8] flex items-center justify-center"><FaUser size={9} color="#fff" /></div>
          <span className="ml-[5px] text-[12.500px]">13907298339</span>
          <Caret className="ml-[7px]" />
          <span className="ml-[9px]">造价豆:0</span>
          <FaBell size={16} color="#3e8fe0" className="ml-[8px]" />
          <More className="ml-auto mr-[3px]" />
        </div>
      </div>
      <div className="h-[28px] flex text-[12px] shrink-0">
        <div className={`${GROUP} w-[152px] h-[27px]`}>
          <div className="ml-[5px]">{I.newDoc}</div>
          <div className="ml-[7px]">{I.open}</div>
          <Caret className="ml-[7px]" />
          <div className="ml-[7px]">{I.save}</div>
          <Sep className="ml-[6px]" />
          <div className="ml-[6px]">{I.undo}</div>
          <Caret className="ml-[6px]" />
          <More className="ml-auto mr-[3px]" />
        </div>
        <div className={`${GROUP} w-[548px] h-[27px] ml-px`}>
          <Tool icon={I.define} label="定义" className="ml-[4px]" />
          <span className="ml-[8px] w-[12px] font-bold text-[14px] text-center leading-none">Σ</span>
          <span className="ml-[6px]">汇总计算</span>
          <Tool icon={I.cloud} label="云检查" className="ml-[7px]" />
          <Tool icon={I.ruler} label="平齐板顶" gray className="ml-[5px]" />
          <Tool icon={I.binoc} label="查找图元" className="ml-[10px]" />
          <Tool icon={I.rebar} label="查看钢筋量" className="ml-[6px]" />
          <Tool icon={I.grid} label="批量选择" gray className="ml-[7px]" />
          <More className="ml-auto mr-[3px]" />
        </div>
        <div className={`${GROUP} flex-1 h-[27px] ml-[2px]`}>
          <Tool icon={I.flat} label="二维" className="ml-[4px]" />
          <Caret className="ml-[7px]" />
          <Tool icon={I.cube} label="俯视" className="ml-[8px]" />
          <Caret className="ml-[7px]" />
          <Tool icon={I.orbit} label="动态观察" className="ml-[7px]" />
          <Tool icon={I.mesh} label="局部三维" className="ml-[7px]" />
          <Sep className="ml-[7px]" />
          <Tool icon={I.zoomAll} label="全屏" className="ml-[4px]" />
          <Tool icon={I.zoom} label="缩放" className="ml-[9px]" />
          <Caret className="ml-[6px]" />
          <Tool icon={I.hand} label="平移" className="ml-[8px]" />
          <Caret className="ml-[6px]" />
          <Tool icon={I.rotate} label="屏幕旋转" className="ml-[7px]" />
          <Caret className="ml-[3px]" />
          <Sep className="ml-[8px]" />
          <Tool icon={I.layers} label="选择楼层" className="ml-[4px]" />
          <More className="ml-auto mr-[3px]" />
        </div>
      </div>
      <div className="h-[626px] flex shrink-0">
        <LeftPanel />
        <div className="w-[2px] shrink-0" />
        <MainArea />
      </div>
      <div className={`h-[20px] flex gap-[2px] text-[12px] text-black shrink-0 ${SERIF}`}>
        <StatusCell className="w-[148px]"><M t="X=320109 Y=5472" /></StatusCell>
        <StatusCell className="w-[78px]">层高:<M t="3.55m" /></StatusCell>
        <StatusCell className="w-[98px]">底标高:<M t="-3.58m" /></StatusCell>
        <StatusCell className="w-[48px]"><M t="0" /></StatusCell>
        <StatusCell className="w-[914px]">按鼠标左键选择筏板边线，按右键确定或ESC取消</StatusCell>
        <StatusCell className="flex-1"><M t="190.7 FPS" /></StatusCell>
      </div>
      <Taskbar />
      <Dialog />
      <SogouBar />
      <svg width="1366" height="768" viewBox="0 0 1366 768" className="absolute inset-0 pointer-events-none">
        <ellipse cx="480" cy="432" rx="191" ry="109.500" fill="none" stroke="#0000ee" strokeWidth="3.500" />
        <ellipse cx="1001" cy="156" rx="61.500" ry="36" fill="none" stroke="#0000ee" strokeWidth="3.500" />
      </svg>
    </div>
  );
}
